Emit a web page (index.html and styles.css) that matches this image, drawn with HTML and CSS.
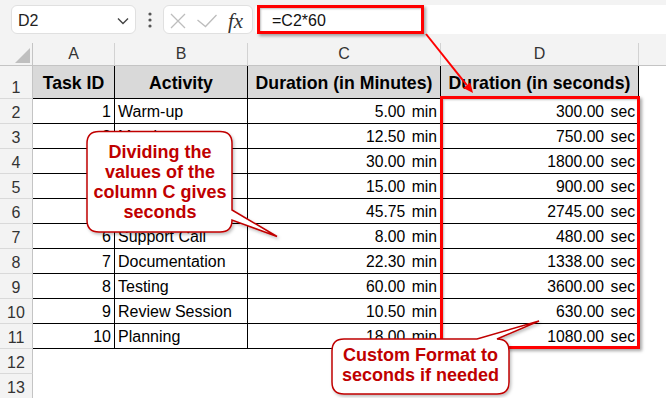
FILE: index.html
```html
<!DOCTYPE html>
<html>
<head>
<meta charset="utf-8">
<title>Excel</title>
<link rel="stylesheet" href="styles.css">
</head>
<body>
<div class="app">
  <div class="toolbar">
    <div class="namebox">
      <span class="name">D2</span>
      <svg class="chev" width="12" height="8" viewBox="0 0 12 8"><path d="M1 1.5 L6 6.5 L11 1.5" fill="none" stroke="#444" stroke-width="1.4"/></svg>
    </div>
    <div class="dots">
      <svg width="4" height="16" viewBox="0 0 4 16"><circle cx="2" cy="2" r="1.6"/><circle cx="2" cy="8" r="1.6"/><circle cx="2" cy="14" r="1.6"/></svg>
    </div>
    <div class="fxbox">
      <svg class="ico-x" width="16" height="16" viewBox="0 0 16 16"><path d="M1 1 L15 15 M15 1 L1 15" stroke="#bdbdbd" stroke-width="1.3" fill="none"/></svg>
      <svg class="ico-check" width="20" height="14" viewBox="0 0 20 14"><path d="M0.5 6 L8.5 12.5 L19.5 1" stroke="#bdbdbd" stroke-width="1.3" fill="none"/></svg>
      <span class="fx">fx</span>
    </div>
    <div class="formula">=C2*60</div>
  </div>

  <div class="sheet">
    <div class="ch corner"><svg width="15" height="15" viewBox="0 0 15 15"><path d="M15 0 V15 H0 Z" fill="#bfbfbf"/></svg></div>
    <div class="ch">A</div>
    <div class="ch">B</div>
    <div class="ch">C</div>
    <div class="ch">D</div>
    <div class="ch ch-e"></div>

    <div class="rh">1</div>
    <div class="hd">Task ID</div>
    <div class="hd">Activity</div>
    <div class="hd">Duration (in Minutes)</div>
    <div class="hd">Duration (in seconds)</div>
    <div class="blank"></div>

    <div class="rh">2</div>
    <div class="cell num">1</div>
    <div class="cell txt">Warm-up</div>
    <div class="cell val">5.00<span class="u">min</span></div>
    <div class="cell val">300.00<span class="u">sec</span></div>
    <div class="blank"></div>

    <div class="rh">3</div>
    <div class="cell num">2</div>
    <div class="cell txt">Meeting</div>
    <div class="cell val">12.50<span class="u">min</span></div>
    <div class="cell val">750.00<span class="u">sec</span></div>
    <div class="blank"></div>

    <div class="rh">4</div>
    <div class="cell num">3</div>
    <div class="cell txt">Coding</div>
    <div class="cell val">30.00<span class="u">min</span></div>
    <div class="cell val">1800.00<span class="u">sec</span></div>
    <div class="blank"></div>

    <div class="rh">5</div>
    <div class="cell num">4</div>
    <div class="cell txt">Email Check</div>
    <div class="cell val">15.00<span class="u">min</span></div>
    <div class="cell val">900.00<span class="u">sec</span></div>
    <div class="blank"></div>

    <div class="rh">6</div>
    <div class="cell num">5</div>
    <div class="cell txt">Design Work</div>
    <div class="cell val">45.75<span class="u">min</span></div>
    <div class="cell val">2745.00<span class="u">sec</span></div>
    <div class="blank"></div>

    <div class="rh">7</div>
    <div class="cell num">6</div>
    <div class="cell txt">Support Call</div>
    <div class="cell val">8.00<span class="u">min</span></div>
    <div class="cell val">480.00<span class="u">sec</span></div>
    <div class="blank"></div>

    <div class="rh">8</div>
    <div class="cell num">7</div>
    <div class="cell txt">Documentation</div>
    <div class="cell val">22.30<span class="u">min</span></div>
    <div class="cell val">1338.00<span class="u">sec</span></div>
    <div class="blank"></div>

    <div class="rh">9</div>
    <div class="cell num">8</div>
    <div class="cell txt">Testing</div>
    <div class="cell val">60.00<span class="u">min</span></div>
    <div class="cell val">3600.00<span class="u">sec</span></div>
    <div class="blank"></div>

    <div class="rh">10</div>
    <div class="cell num">9</div>
    <div class="cell txt">Review Session</div>
    <div class="cell val">10.50<span class="u">min</span></div>
    <div class="cell val">630.00<span class="u">sec</span></div>
    <div class="blank"></div>

    <div class="rh">11</div>
    <div class="cell num">10</div>
    <div class="cell txt">Planning</div>
    <div class="cell val">18.00<span class="u">min</span></div>
    <div class="cell val">1080.00<span class="u">sec</span></div>
    <div class="blank"></div>

    <div class="rh">12</div>
    <div class="blank"></div><div class="blank"></div><div class="blank"></div><div class="blank"></div><div class="blank"></div>

    <div class="rh">13</div>
    <div class="blank"></div><div class="blank"></div><div class="blank"></div><div class="blank"></div><div class="blank"></div>
  </div>

  <div class="mark mark-formula"></div>
  <div class="mark mark-col"></div>

  <svg class="overlay" width="666" height="398" viewBox="0 0 666 398">
    <defs>
      <filter id="sh" x="-10%" y="-10%" width="130%" height="140%">
        <feDropShadow dx="1.5" dy="2" stdDeviation="1.5" flood-color="#000" flood-opacity="0.25"/>
      </filter>
    </defs>
    <line x1="426" y1="34" x2="466.8" y2="85.2" stroke="#ff0000" stroke-width="2"/>
    <polygon points="473,93 463.3,88 470.3,82.4" fill="#ff0000"/>
    <path filter="url(#sh)" d="M99 131.5 H220 Q232 131.5 232 143.5 V210 L277 236.5 L232 220 Q232 232 220 232 H99 Q87 232 87 220 V143.5 Q87 131.5 99 131.5 Z" fill="#fff" stroke="#c00000" stroke-width="1.5"/>
    <path filter="url(#sh)" d="M344 339 H477 L539 321 L497 339 Q509 339 509 351 V382 Q509 394 497 394 H344 Q332 394 332 382 V351 Q332 339 344 339 Z" fill="#fff" stroke="#c00000" stroke-width="1.5"/>
  </svg>

  <div class="note note-left">Dividing the<br>values of the<br>column C gives<br>seconds</div>
  <div class="note note-right">Custom Format to<br>seconds if needed</div>
</div>
</body>
</html>
```

FILE: styles.css
```css
* {
  box-sizing: border-box;
  margin: 0;
  padding: 0;
}

html, body {
  width: 666px;
  height: 398px;
  overflow: hidden;
  background: #ffffff;
}

body {
  font-family: "Liberation Sans", Arial, sans-serif;
  color: #000;
}

.app {
  position: relative;
  width: 666px;
  height: 398px;
  overflow: hidden;
}

/* ---------- toolbar ---------- */
.toolbar {
  display: flex;
  align-items: flex-start;
  height: 43px;
  padding-top: 5px;
  background: #f3f3f3;
}

.namebox {
  margin-left: 11px;
  width: 125px;
  height: 29px;
  background: #fff;
  border: 1px solid #e0e0e0;
  border-radius: 6px;
  display: flex;
  align-items: center;
  justify-content: space-between;
  padding: 3px 6px 0 6px;
}

.name {
  font-size: 16px;
  color: #222;
}

.dots {
  width: 27px;
  height: 29px;
  display: flex;
  align-items: center;
  justify-content: center;
  padding-top: 1px;
}

.dots circle {
  fill: #555;
}

.fxbox {
  width: 90px;
  height: 29px;
  background: #fff;
  border: 1px solid #e0e0e0;
  border-radius: 6px;
  display: flex;
  align-items: center;
  padding: 2px 0 0 6px;
}

.ico-check {
  margin-left: 11px;
  margin-top: 1px;
}

.fx {
  margin-left: 11px;
  font-family: "Liberation Serif", "Times New Roman", serif;
  font-style: italic;
  font-size: 21px;
  color: #333;
  line-height: 20px;
}

.formula {
  margin-left: 2px;
  flex: 1;
  height: 29px;
  background: #fff;
  border-radius: 4px 0 0 4px;
  padding: 3px 0 0 17px;
  font-size: 16px;
  line-height: 26px;
  color: #111;
}

/* ---------- sheet ---------- */
.sheet {
  display: grid;
  grid-template-columns: 33px 82px 133px 193px 198px 27px;
  grid-template-rows: 23px 33px repeat(12, 25px);
}

.ch {
  background: #f3f3f3;
  border-right: 1px solid #d2d2d2;
  border-bottom: 1px solid #c4c4c4;
  display: flex;
  align-items: center;
  justify-content: center;
  font-size: 16px;
  color: #333;
}

.ch-e {
  border-right: none;
}

.corner {
  justify-content: flex-end;
  align-items: flex-end;
  padding: 0 2px 2px 0;
  border-right-color: #c4c4c4;
}

.corner svg {
  display: block;
}

.rh {
  background: #f3f3f3;
  border-right: 1px solid #c4c4c4;
  border-bottom: 1px solid #d9d9d9;
  display: flex;
  align-items: flex-end;
  justify-content: center;
  padding-bottom: 1px;
  font-size: 16px;
  line-height: 18px;
  color: #333;
}

.hd {
  background: #d9d9d9;
  border-right: 1px solid #000;
  border-bottom: 1px solid #000;
  display: flex;
  align-items: center;
  justify-content: center;
  padding-top: 2px;
  font-weight: bold;
  font-size: 17.7px;
  white-space: nowrap;
}

.blank {
  background: #fff;
}

.cell {
  background: #fff;
  border-right: 1px solid #000;
  border-bottom: 1px solid #000;
  display: flex;
  align-items: center;
  padding-top: 2px;
  white-space: nowrap;
  overflow: hidden;
}

.num {
  justify-content: flex-end;
  padding-right: 3px;
  font-size: 16px;
}

.txt {
  padding-left: 3px;
  font-size: 16px;
}

.val {
  justify-content: flex-end;
  padding-right: 3px;
  font-size: 15.7px;
}

.u {
  margin-left: 6.5px;
}

/* ---------- annotations ---------- */
.mark {
  position: absolute;
  border: 3px solid #ff0000;
  box-shadow: 2px 2px 3px rgba(0, 0, 0, 0.35), inset 1px 1px 2px rgba(0, 0, 0, 0.25);
}

.mark-formula {
  left: 257px;
  top: 5px;
  width: 167px;
  height: 29px;
}

.mark-col {
  left: 440px;
  top: 96px;
  width: 200px;
  height: 253px;
}

.overlay {
  position: absolute;
  left: 0;
  top: 0;
  pointer-events: none;
}

.note {
  position: absolute;
  display: flex;
  align-items: center;
  justify-content: center;
  text-align: center;
  color: #c00000;
  font-weight: bold;
  font-size: 18px;
  line-height: 20px;
  white-space: nowrap;
}

.note-left {
  left: 87px;
  top: 132px;
  width: 146px;
  height: 100px;
}

.note-right {
  left: 332px;
  top: 339px;
  width: 177px;
  height: 55px;
  padding-bottom: 3px;
}
```
